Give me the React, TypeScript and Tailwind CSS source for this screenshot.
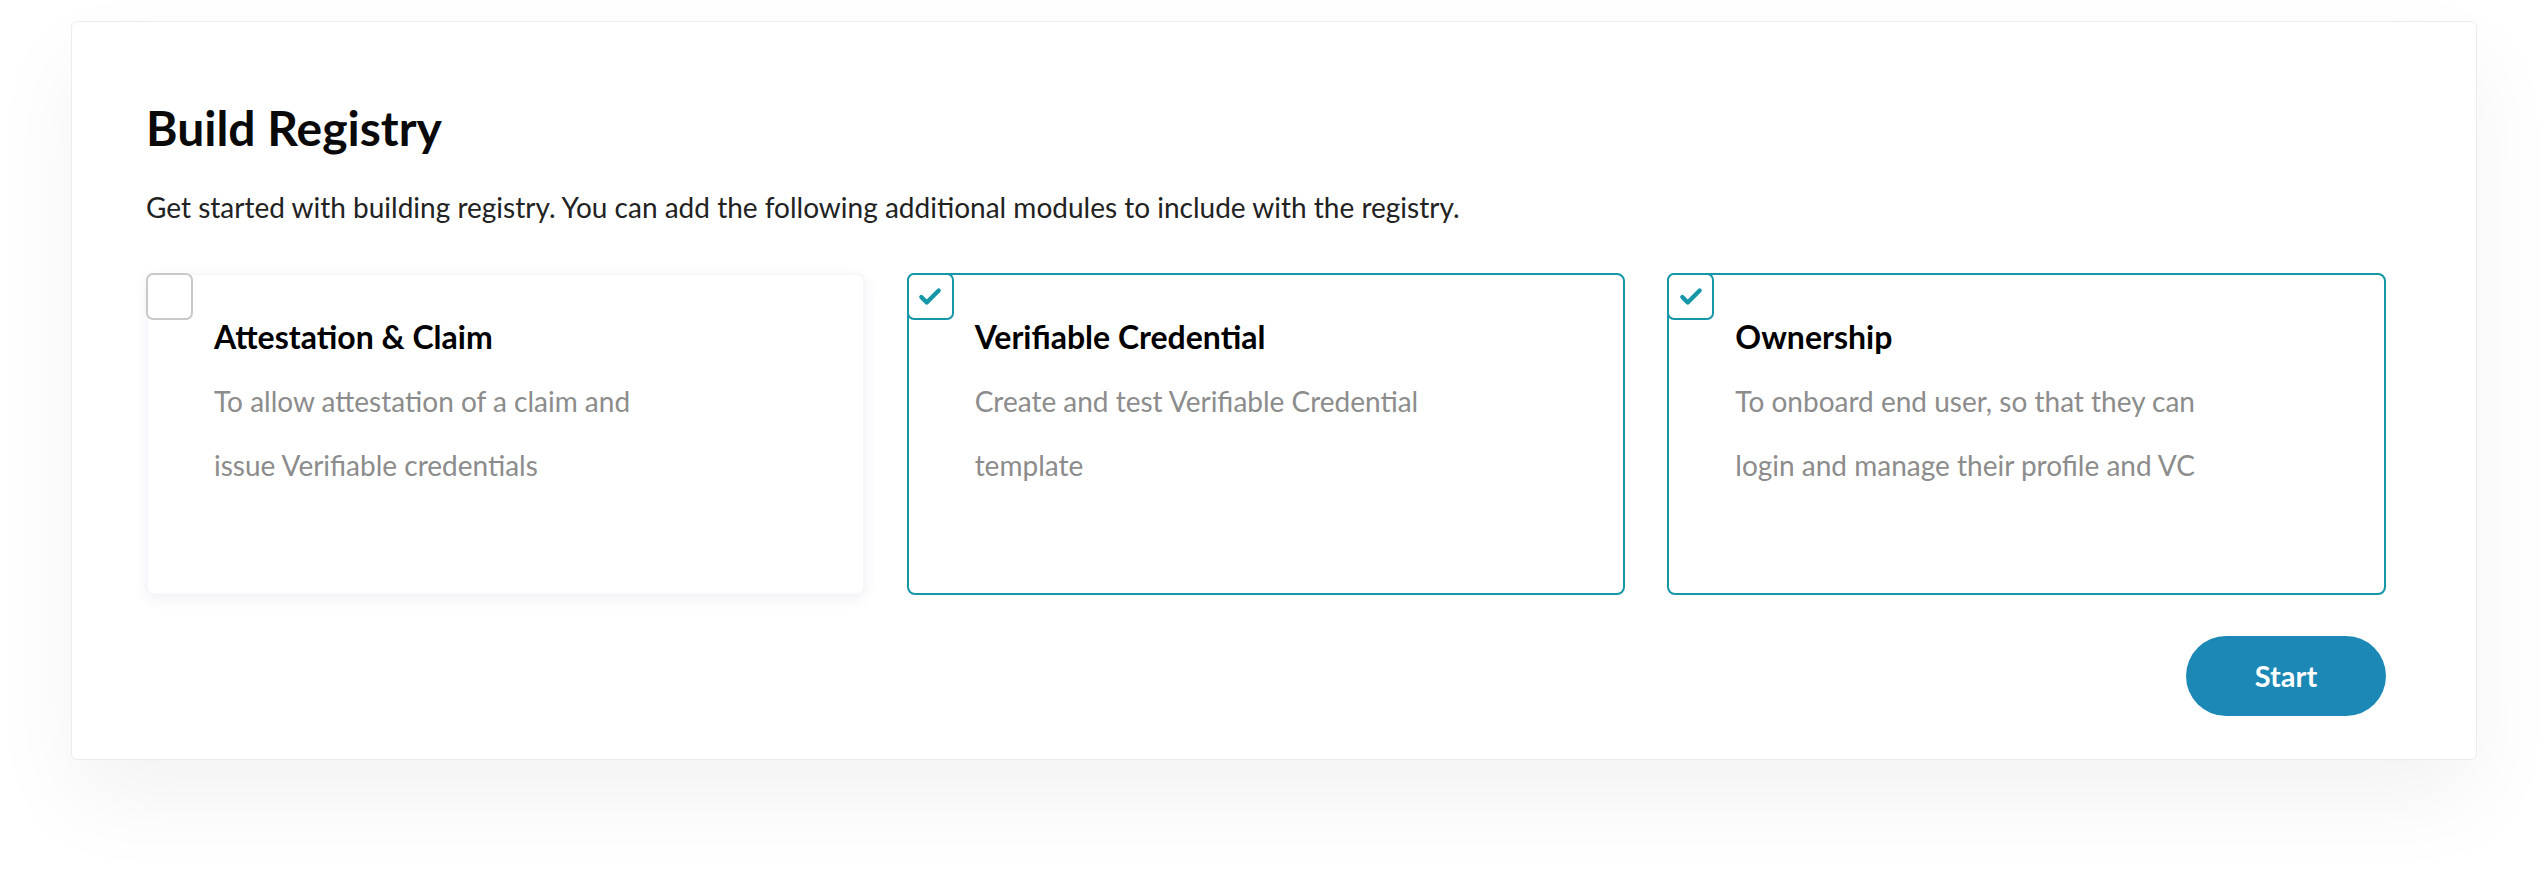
import { Check } from 'lucide-react'

type Module = {
  title: string
  lines: string[]
  selected: boolean
}

const modules: Module[] = [
  {
    title: 'Attestation & Claim',
    lines: ['To allow attestation of a claim and', 'issue Verifiable credentials'],
    selected: false,
  },
  {
    title: 'Verifiable Credential',
    lines: ['Create and test Verifiable Credential', 'template'],
    selected: true,
  },
  {
    title: 'Ownership',
    lines: ['To onboard end user, so that they can', 'login and manage their profile and VC'],
    selected: true,
  },
]

function ModuleCard({ title, lines, selected }: Module) {
  return (
    <div
      className={
        selected
          ? 'relative h-[322px] rounded-[8px] border-2 border-[#1597a8] bg-white pl-[66px] pt-[46px]'
          : 'relative h-[322px] rounded-[8px] border-2 border-[#f6f6fb] bg-white pl-[66px] pt-[46px] shadow-[0_4px_14px_rgba(60,60,140,0.07)]'
      }
    >
      <div
        className={
          selected
            ? 'absolute -left-[2px] -top-[2px] flex h-[47px] w-[47px] items-center justify-center rounded-[7px] border-2 border-[#1597a8] bg-white'
            : 'absolute -left-[2px] -top-[2px] h-[47px] w-[47px] rounded-[7px] border-2 border-[#c9c9c9] bg-white'
        }
      >
        {selected && <Check className="h-[26px] w-[26px] text-[#1597a8]" strokeWidth={4} />}
      </div>
      <h3 className="text-[32px] leading-none font-bold text-black">{title}</h3>
      <div className="mt-[16px] text-[28px] leading-[64px] text-[#8c8c8c]">
        {lines.map((l) => (
          <p key={l}>{l}</p>
        ))}
      </div>
    </div>
  )
}

export default function App() {
  return (
    <div className="h-[884px] w-full bg-white pl-[71px] pt-[21px] font-['Lato',_'Open_Sans',_sans-serif]">
      <div className="flex h-[739px] w-[2406px] flex-col rounded-[6px] border border-[#ececec] bg-white pb-[43px] pl-[74px] pr-[90px] pt-[82px] shadow-[0_40px_90px_rgba(0,0,0,0.05)]">
        <h1 className="text-[48px] leading-none font-bold text-[#0a0a0a]">Build Registry</h1>
        <p className="mt-[41px] text-[28px] leading-none text-[#222]">
          Get started with building registry. You can add the following additional modules to include with the registry.
        </p>
        <div className="mt-[52px] grid grid-cols-3 gap-[42px]">
          {modules.map((m) => (
            <ModuleCard key={m.title} {...m} />
          ))}
        </div>
        <div className="mt-auto flex justify-end">
          <button
            type="button"
            className="flex h-[80px] w-[200px] items-center justify-center rounded-full bg-[#1b88b5] text-[29px] font-bold text-white"
          >
            Start
          </button>
        </div>
      </div>
    </div>
  )
}
